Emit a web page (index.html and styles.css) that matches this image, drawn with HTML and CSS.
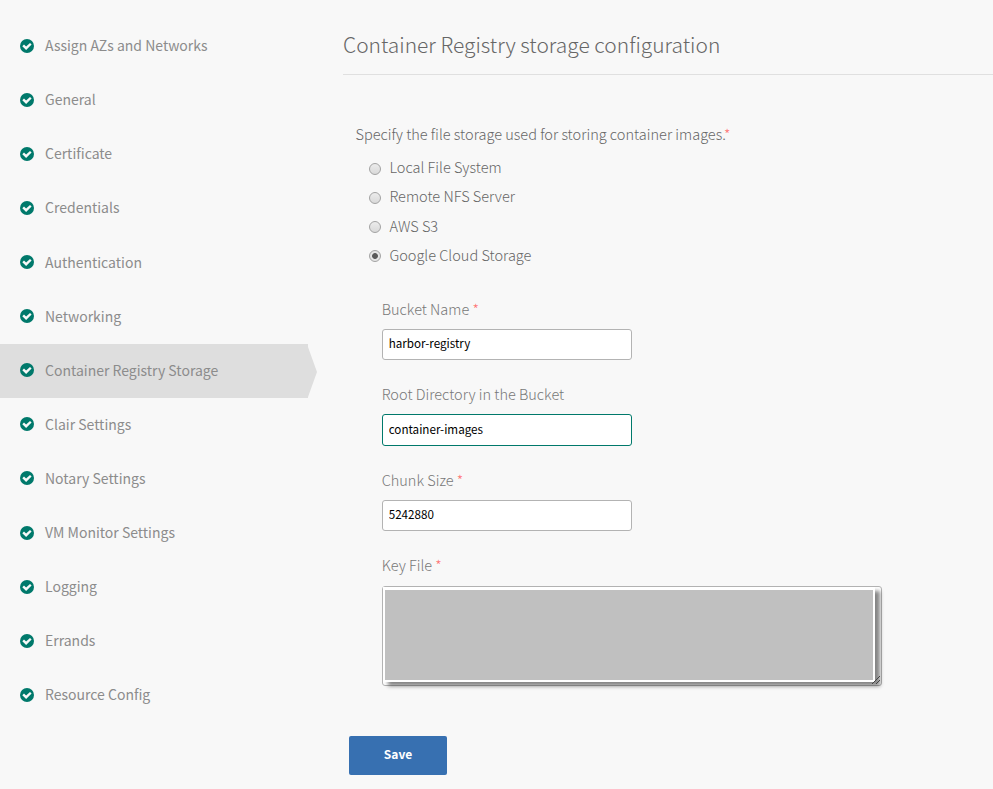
FILE: index.html
```html
<!DOCTYPE html>
<html lang="en">
<head>
<meta charset="utf-8">
<title>Container Registry Storage</title>
<link rel="stylesheet" href="styles.css">
</head>
<body>
<svg class="defs" width="0" height="0"><symbol id="check" viewBox="0 0 14 14"><circle cx="7" cy="7" r="7" fill="#00796b"/><path d="M2.3 7.3 4 5.6 6.1 7.6 10 3.9 11.6 5.5 6.1 10.9Z" fill="#f8f8f8"/></symbol></svg>
<div class="layout">
  <nav class="sidebar">
    <a class="item"><svg class="icon"><use href="#check"/></svg><span class="name">Assign AZs and Networks</span></a>
    <a class="item"><svg class="icon"><use href="#check"/></svg><span class="name">General</span></a>
    <a class="item"><svg class="icon"><use href="#check"/></svg><span class="name">Certificate</span></a>
    <a class="item"><svg class="icon"><use href="#check"/></svg><span class="name">Credentials</span></a>
    <a class="item"><svg class="icon"><use href="#check"/></svg><span class="name">Authentication</span></a>
    <a class="item"><svg class="icon"><use href="#check"/></svg><span class="name">Networking</span></a>
    <a class="item active"><svg class="icon"><use href="#check"/></svg><span class="name">Container Registry Storage</span></a>
    <a class="item"><svg class="icon"><use href="#check"/></svg><span class="name">Clair Settings</span></a>
    <a class="item"><svg class="icon"><use href="#check"/></svg><span class="name">Notary Settings</span></a>
    <a class="item"><svg class="icon"><use href="#check"/></svg><span class="name">VM Monitor Settings</span></a>
    <a class="item"><svg class="icon"><use href="#check"/></svg><span class="name">Logging</span></a>
    <a class="item"><svg class="icon"><use href="#check"/></svg><span class="name">Errands</span></a>
    <a class="item"><svg class="icon"><use href="#check"/></svg><span class="name">Resource Config</span></a>
  </nav>
  <main class="content">
    <h1 class="title">Container Registry storage configuration</h1>
    <form class="form">
      <p class="question">Specify the file storage used for storing container images.<span class="req">*</span></p>
      <div class="options">
        <label class="option"><span class="radio"></span>Local File System</label>
        <label class="option"><span class="radio"></span>Remote NFS Server</label>
        <label class="option"><span class="radio"></span>AWS S3</label>
        <label class="option"><span class="radio checked"></span>Google Cloud Storage</label>
      </div>
      <div class="fields">
        <div class="field"><label class="label">Bucket Name <span class="req">*</span></label><input class="input" value="harbor-registry"></div>
        <div class="field"><label class="label">Root Directory in the Bucket</label><input class="input focused" value="container-images"></div>
        <div class="field"><label class="label">Chunk Size <span class="req">*</span></label><input class="input" value="5242880"></div>
        <div class="field"><label class="label">Key File <span class="req">*</span></label>
          <div class="keyfile"><div class="mask"></div><svg class="grip" viewBox="0 0 8 8"><path d="M0 8 8 0M4 8 8 4" stroke="#444" fill="none"/></svg></div>
        </div>
      </div>
      <button class="save" type="button">Save</button>
    </form>
  </main>
</div>
</body>
</html>
```
FILE: styles.css
```css
* { box-sizing: border-box; }
body {
  margin: 0;
  height: 789px;
  overflow: hidden;
  background: #f8f8f8;
  color: #666;
  font-family: "Noto Sans CJK SC", "Open Sans", sans-serif;
  font-weight: 300;
}
.defs { position: absolute; }
.layout { display: grid; grid-template-columns: 343px 1fr; }
.sidebar { padding-top: 19.4px; }
.item {
  display: flex;
  align-items: center;
  gap: 11px;
  width: 308px;
  height: 54.1px;
  padding: 0 0 1.4px 20px;
  color: #8c8c8c;
  font-size: 14px;
  font-weight: 400;
  line-height: 20px;
  white-space: nowrap;
}
.name { margin-bottom: 1.2px; }
.icon { width: 14px; height: 14px; flex: none; }
.active {
  width: 317px;
  background: #dedede;
  clip-path: polygon(0 0, 308px 0, 308px 3px, 317px 28px, 308px 53px, 308px 100%, 0 100%);
}
.title {
  margin: 0;
  height: 75px;
  padding-top: 29px;
  border-bottom: 1px solid #e0e0e0;
  font-size: 20.95px;
  font-weight: 300;
  line-height: 30px;
  white-space: nowrap;
}
.form { padding-left: 6px; }
.question { margin: 49px 0 0 6.5px; font-size: 14.54px; line-height: 20px; white-space: nowrap; }
.req { color: #ff7373; }
.options { margin: 8.25px 0 0 20px; }
.option { display: flex; align-items: center; gap: 8.4px; height: 29.4px; font-size: 14.54px; line-height: 20px; }
.radio {
  width: 12px;
  height: 12px;
  margin-top: 3.2px;
  border: 1px solid #a3a3a3;
  border-radius: 50%;
  background: linear-gradient(#ececec, #d9d9d9);
}
.checked {
  margin-top: 2.4px;
  background: radial-gradient(circle, #5a5a5a 0 2.5px, #e6e6e6 3.3px);
}
.fields { margin: 28.95px 0 0 32.7px; }
.field { height: 85.5px; }
.label { display: block; height: 29.9px; font-size: 14.52px; line-height: 20px; color: #777; }
.input {
  display: block;
  width: 250px;
  height: 31px;
  padding: 0 6px 3px;
  border: 1px solid #b3b3b3;
  border-radius: 3px;
  outline: none;
  background: #fff;
  color: #000;
  font: 400 11.65px "Noto Sans CJK SC", sans-serif;
}
.focused { height: 32px; border-color: #00796b; }
.keyfile {
  position: relative;
  width: 500px;
  height: 100px;
  margin-top: .7px;
  border: 1px solid #b3b3b3;
  border-radius: 3px;
  background: #fff;
}
.mask {
  width: 492px;
  height: 95px;
  border: 2px solid #fff;
  border-top-width: 3px;
  background: #c0c0c0;
  box-shadow: 5px 4px 4px rgba(0, 0, 0, .48);
}
.grip { position: absolute; right: 1px; bottom: 1px; width: 8px; height: 8px; }
.save {
  display: block;
  width: 98px;
  height: 39px;
  margin-top: 95.2px;
  padding: 0 0 4px;
  border: 0;
  border-radius: 2px;
  background: #3770b1;
  color: #fff;
  font: 700 12px "Noto Sans CJK SC", sans-serif;
}
```
